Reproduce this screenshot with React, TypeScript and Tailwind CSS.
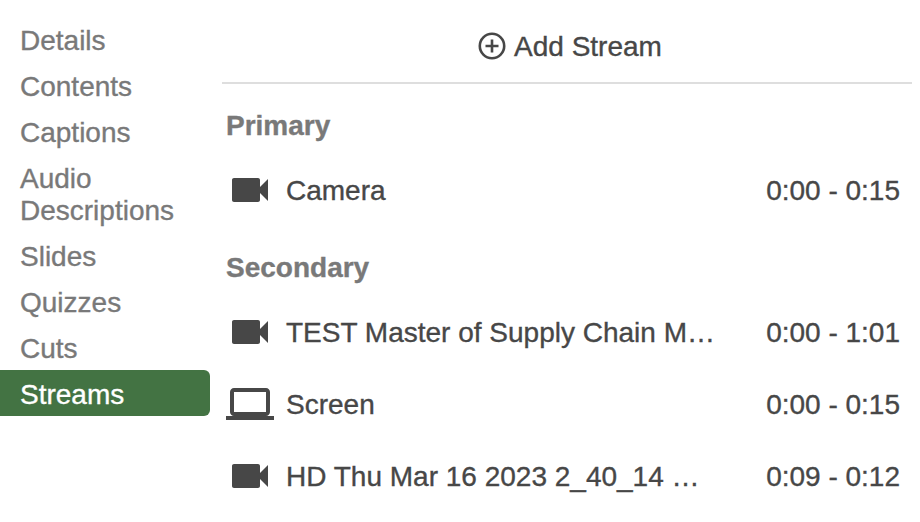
import React from "react";

const nav: { label: string; active?: boolean }[] = [
  { label: "Details" },
  { label: "Contents" },
  { label: "Captions" },
  { label: "Audio Descriptions" },
  { label: "Slides" },
  { label: "Quizzes" },
  { label: "Cuts" },
  { label: "Streams", active: true },
];

function CameraIcon() {
  return (
    <svg className="h-[48px] w-[48px] shrink-0" viewBox="0 0 24 24" fill="currentColor">
      <path d="M17 10.5V7c0-.55-.45-1-1-1H4c-.55 0-1 .45-1 1v10c0 .55.45 1 1 1h12c.55 0 1-.45 1-1v-3.500l4 4v-11l-4 4z" />
    </svg>
  );
}

function LaptopIcon() {
  return (
    <svg className="h-[48px] w-[48px] shrink-0" viewBox="0 0 24 24" fill="currentColor">
      <path d="M20 18c1.100 0 1.990-.9 1.990-2L22 6c0-1.100-.9-2-2-2H4c-1.100 0-2 .9-2 2v10c0 1.100.9 2 2 2H0v2h24v-2h-4zM4 6h16v10H4V6z" />
    </svg>
  );
}

function Row({ icon, name, time }: { icon: "camera" | "laptop"; name: string; time: string }) {
  return (
    <div className="flex h-[72px] items-center pl-1 pr-[12px]">
      <div className="flex w-[60px] items-center">{icon === "camera" ? <CameraIcon /> : <LaptopIcon />}</div>
      <span className="grow whitespace-nowrap pt-0.5">{name}</span>
      <span className="w-[134px] shrink-0 whitespace-nowrap pt-0.5 text-right">{time}</span>
    </div>
  );
}

export default function App() {
  return (
    <div className="flex h-[522px] w-[920px] overflow-hidden bg-white font-['Liberation_Sans',Arial,sans-serif] text-[28px] leading-8 text-[#474747] [-webkit-text-stroke:0.35px_currentColor]">
      <nav className="w-[210px] shrink-0 pt-4 text-[#797979]">
        {nav.map((n) => (
          <div key={n.label} className={n.active ? "rounded-r-md bg-[#437343] pb-[5px] pl-5 pt-[9px] text-white" : "pb-[5px] pl-5 pt-[9px]"}>
            {n.label}
          </div>
        ))}
      </nav>
      <main className="ml-3 w-[690px]">
        <div className="flex h-[84px] items-center justify-center gap-2 border-b-2 border-[#dedede] pl-1.5 pt-[10px]">
          <svg className="size-7" viewBox="0 0 28 28" fill="none" stroke="currentColor" strokeWidth="2.600">
            <circle cx="14" cy="14" r="12.200" />
            <path d="M14 7.500v13M7.500 14h13" />
          </svg>
          <span className="pt-0.5">Add Stream</span>
        </div>
        <h2 className="h-[70px] pl-1 pt-[26px] font-bold text-[#797979]">Primary</h2>
        <Row icon="camera" name="Camera" time="0:00 - 0:15" />
        <h2 className="h-[70px] pl-1 pt-[26px] font-bold text-[#797979]">Secondary</h2>
        <Row icon="camera" name="TEST Master of Supply Chain M…" time="0:00 - 1:01" />
        <Row icon="laptop" name="Screen" time="0:00 - 0:15" />
        <Row icon="camera" name="HD Thu Mar 16 2023 2_40_14 …" time="0:09 - 0:12" />
      </main>
    </div>
  );
}
